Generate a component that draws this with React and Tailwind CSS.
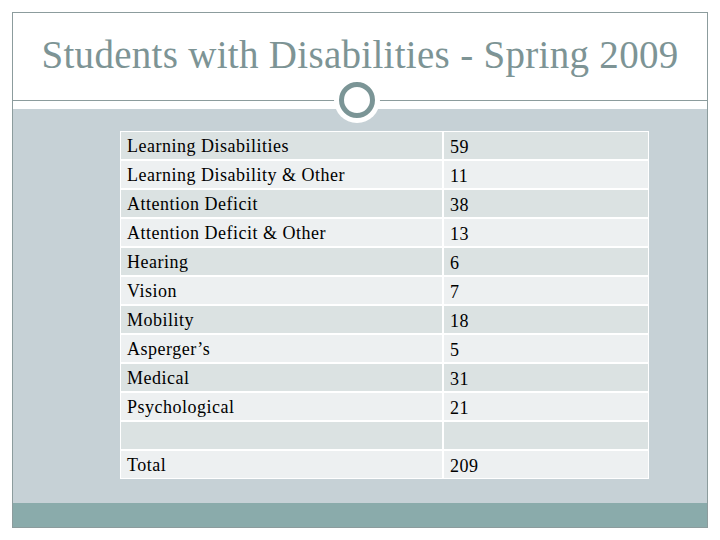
const rows = [
  ["Learning Disabilities", "59"],
  ["Learning Disability & Other", "11"],
  ["Attention Deficit", "38"],
  ["Attention Deficit & Other", "13"],
  ["Hearing", "6"],
  ["Vision", "7"],
  ["Mobility", "18"],
  ["Asperger’s", "5"],
  ["Medical", "31"],
  ["Psychological", "21"],
  ["", ""],
  ["Total", "209"],
]

const App = () => {
  return (
    <div
      className="w-[720px] h-[540px] bg-white pt-[12px] pl-[12px]"
      style={{ fontFamily: '"Liberation Serif", "Times New Roman", serif' }}
    >
      <div className="relative w-[696px] h-[516px] border border-[#8c9c9d] flex flex-col">
        {/* title */}
        <div className="h-[88px] border-b border-[#8c9c9d] flex items-center justify-center pb-[4px]">
          <h1 className="text-[39px] text-[#7d9495] leading-none tracking-[0.3px]">
            Students with Disabilities - Spring 2009
          </h1>
        </div>
        <div className="h-[8px]" />

        {/* ring on the rule */}
        <div className="absolute left-[321px] top-[64px] w-[46px] h-[46px] rounded-full bg-white flex items-center justify-center">
          <div className="w-[36px] h-[36px] rounded-full border-[5px] border-[#7b9596] bg-white" />
        </div>

        <div className="flex-1 bg-[#c6d1d6] pt-[22px] pl-[107px]">
          <div className="w-[529px] bg-white p-[1px] flex flex-col gap-[2px]">
            {rows.map(([label, count], i) => (
              <div key={i} className="flex gap-[2px] h-[27px] text-[18px] tracking-[0.5px] text-black">
                <div
                  className={
                    "w-[321px] pl-[6px] flex items-center pt-[2px] " +
                    (i % 2 === 0 ? "bg-[#dbe2e2]" : "bg-[#edf0f1]")
                  }
                >
                  {label}
                </div>
                <div
                  className={
                    "flex-1 pl-[6px] flex items-center pt-[4px] " +
                    (i % 2 === 0 ? "bg-[#dbe2e2]" : "bg-[#edf0f1]")
                  }
                >
                  {count}
                </div>
              </div>
            ))}
          </div>
        </div>

        <div className="h-[24px] bg-[#8aabab]" />
      </div>
    </div>
  )
}

export default App
